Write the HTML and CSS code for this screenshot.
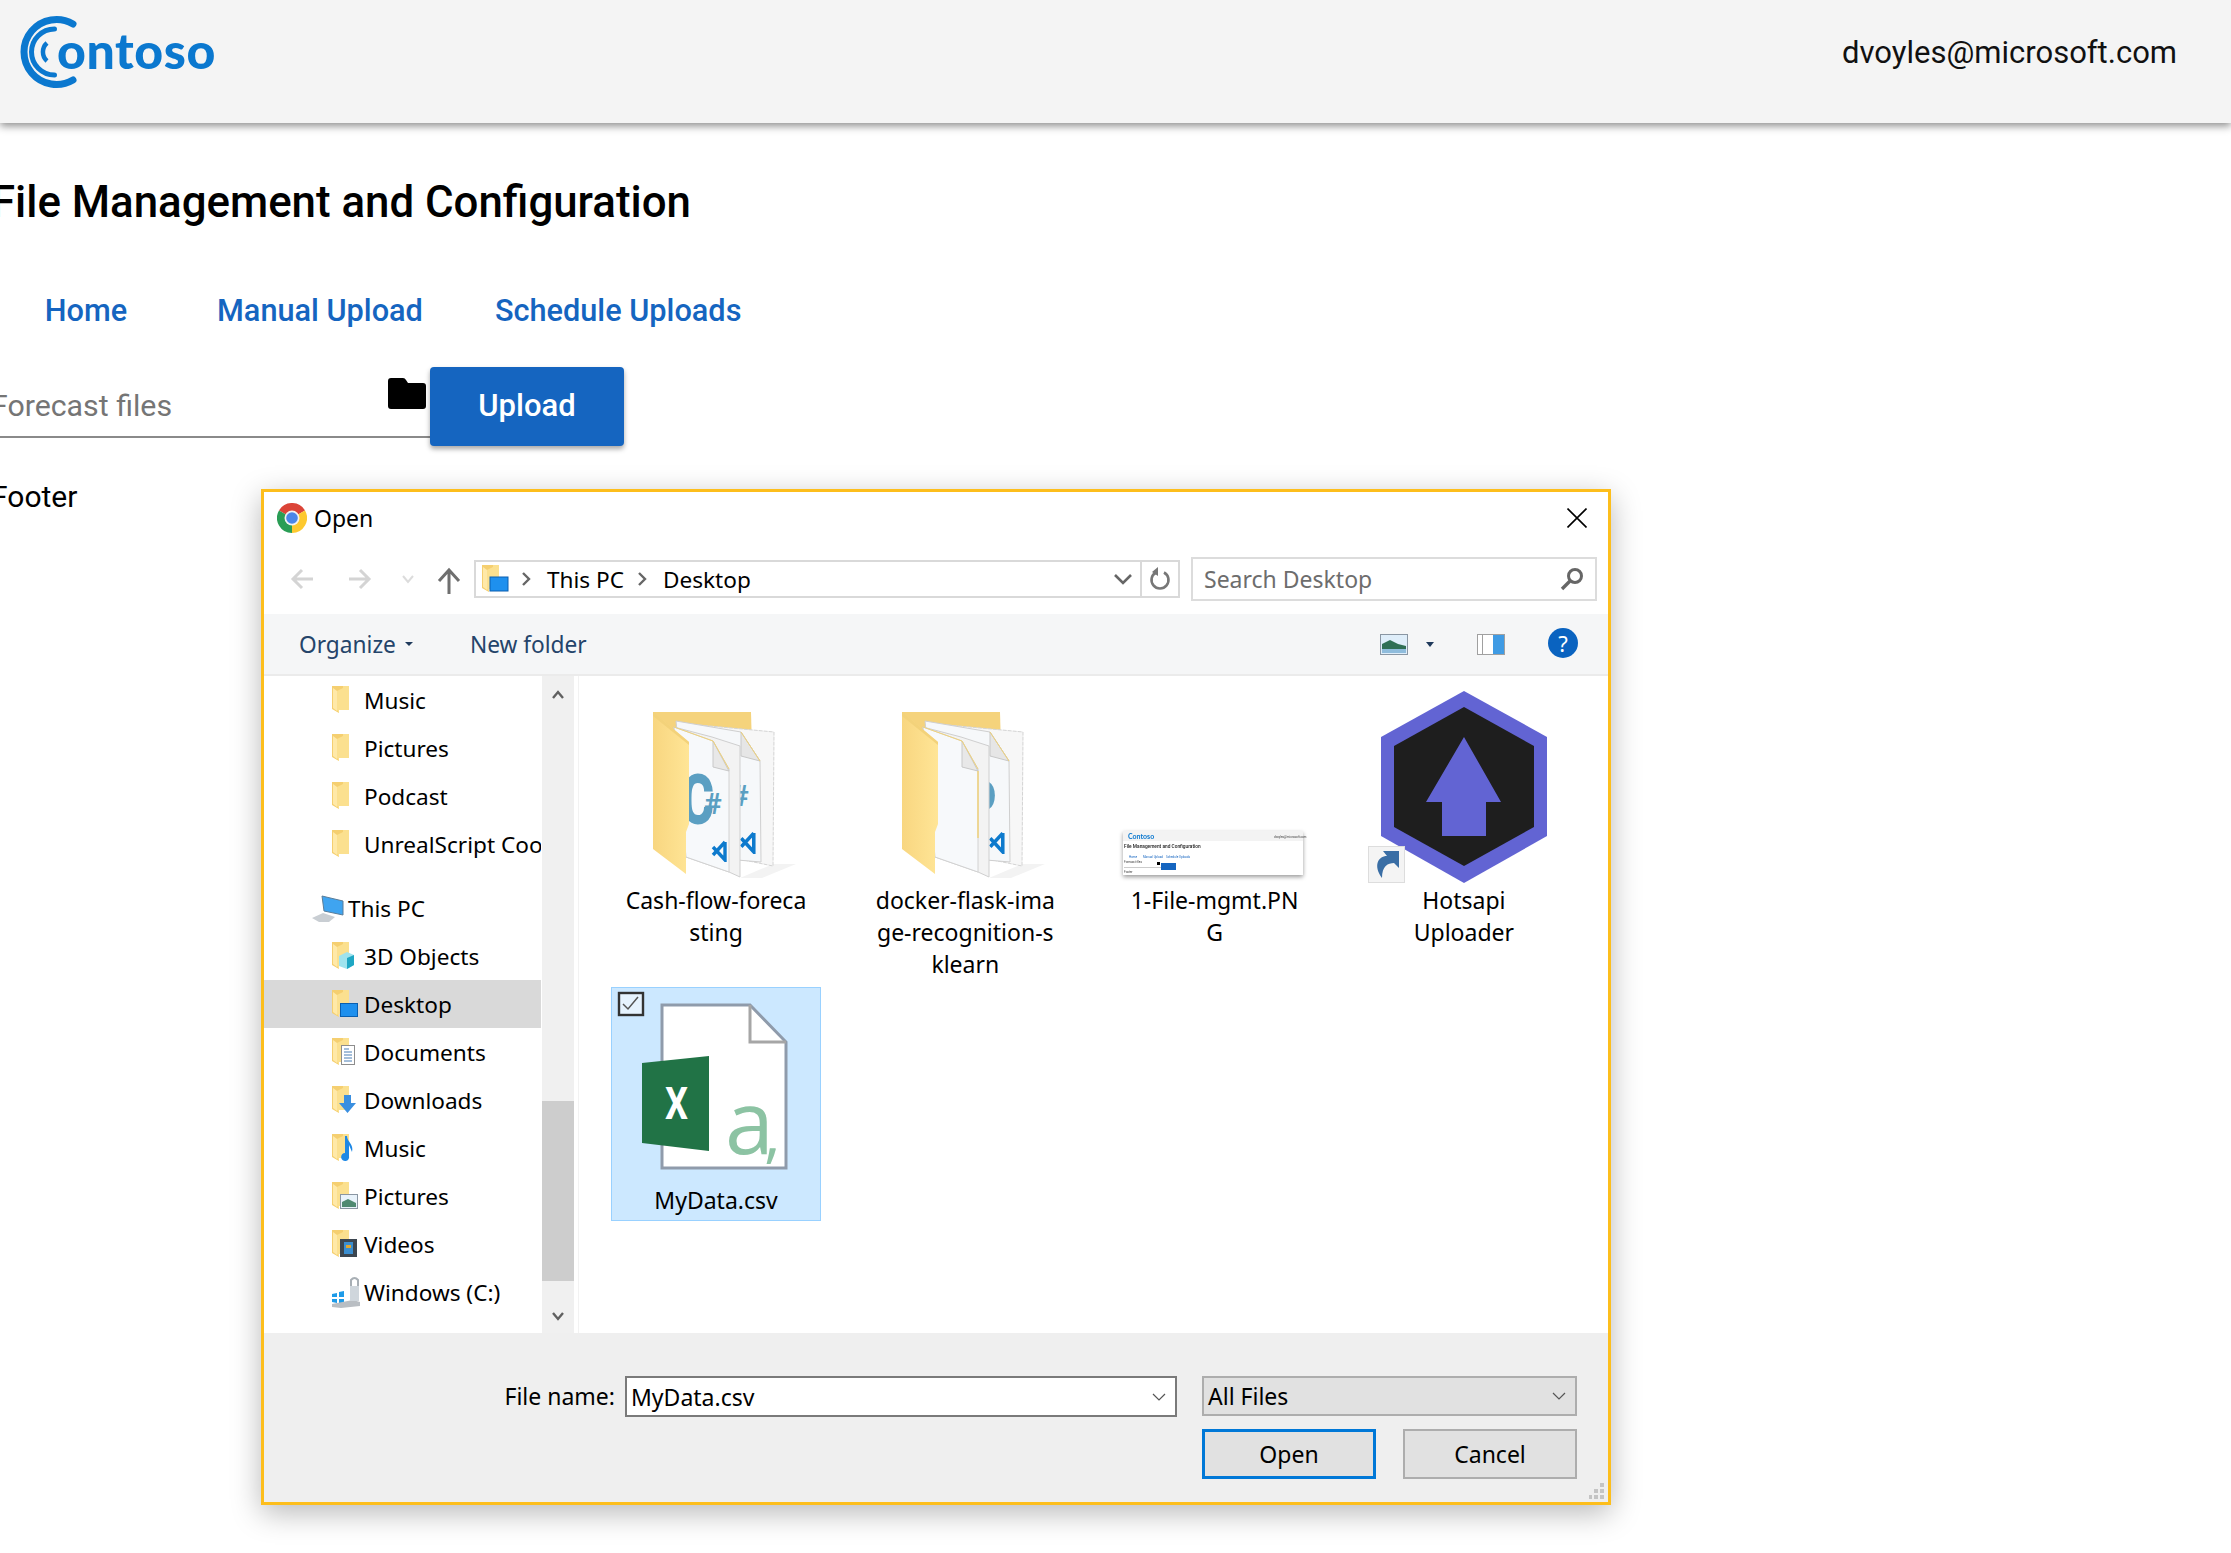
FILE: index.html
```html
<!DOCTYPE html>

<html>

<head>

<meta http-equiv="Content-Type" content="text/html; charset=utf-8" />
<title>File Management and Configuration</title>

<link rel="stylesheet" href="styles.css">

</head>

<body>

<svg class="Hidden">
    <defs>
        <linearGradient id="FlapFill" x1="0" y1="0" x2="1" y2="0">
            <stop offset="0" stop-color="#f8d680" />
            <stop offset="1" stop-color="#ffe596" />
        </linearGradient>
        <symbol id="SmallFolder" viewBox="0 0 18 28">
            <polygon points="0,0 17,0 17,24 7,24 7,27 0,22" fill="#fbe08f" />
            <polygon points="0,0 11,0 11,2 5,5 5,24 7,27 0,23" fill="#f5cf70" />
            <polygon points="1,2 5,5 5,25 1,22" fill="#ffe9a8" />
        </symbol>
        <symbol id="VsMark" viewBox="0 0 16 22">
            <path d="M14 2V20L2 7M14 2L2 15" fill="none" stroke="#0d7acd" stroke-width="3.4" />
        </symbol>
        <symbol id="FolderBack" viewBox="0 0 208 196">
            <polygon points="161,176 128,190 150,190 184,176" fill="#f3f3f3" />
            <polygon points="41,24 139,24 140,60 100,60 41,60" fill="#f5d37c" />
            <polygon points="77,36 162,44 161,178 127,171" fill="#f7f7f7" stroke="#d4d4d4" stroke-dasharray="4 1" />
            <polygon points="64,33 129,44 148,73 149,174 77,168" fill="#f6f8fa" stroke="#cfcfcf" />
            <polygon points="129,44 129,68 148,73" fill="#e6e6e6" stroke="#c8c8c8" />
            <path d="M129 44L148 73" stroke="#f0d27a" />
            <use href="#VsMark" x="127" y="143" width="17" height="23" />
        </symbol>
        <symbol id="FolderFlap" viewBox="0 0 208 196">
            <polygon points="41,24 77,54 77,136 74,144 74,186 41,161" fill="url(#FlapFill)" />
            <polygon points="41,24 77,54 77,57 41,28" fill="#f3d27a" />
        </symbol>
        <symbol id="FrontDoc" viewBox="0 0 208 196">
            <polygon points="62,39 100,49 128,58 128,189 117,184 74,169" fill="#f3f3f3" stroke="#cfcfcf" />
            <polygon points="62,39 101,53 117,81 117,184 74,169" fill="#f7f9fb" stroke="#d2d2d2" />
            <polygon points="101,53 101,79 117,83" fill="#e8e8e8" stroke="#c8c8c8" />
            <path d="M62 39L101 53L117 81" fill="none" stroke="#f0d27a" />
        </symbol>
    </defs>
</svg>

<header class="TopBar">
    <div class="Logo">
        <svg class="LogoMark" width="70" height="76" viewBox="0 0 70 76">
            <path d="M59 10A32.5 32.5 0 1 0 59 66" fill="none" stroke="#0b78cf" stroke-width="7" stroke-linecap="round" />
            <path d="M40.500 15A23 23 0 0 0 40.500 61" fill="none" stroke="#0b78cf" stroke-width="5" stroke-linecap="round" />
            <path d="M33 29A12 12 0 0 0 33 47" fill="none" stroke="#0b78cf" stroke-width="4.500" />
        </svg>
        <span class="LogoText">ontoso</span>
    </div>
    <div class="UserEmail">dvoyles@microsoft.com</div>
</header>

<main class="Page">
    <h1 class="PageTitle">File Management and Configuration</h1>
    <nav class="NavTabs">
        <a class="NavTab">Home</a>
        <a class="NavTab">Manual Upload</a>
        <a class="NavTab">Schedule Uploads</a>
    </nav>
    <div class="UploadRow">
        <div class="FileInput">
            <span class="FileHint">Forecast files</span>
            <svg class="FolderGlyph" width="38" height="31" viewBox="0 0 38 31">
                <path d="M3 0H15Q17 0 18 2L20 5H35Q38 5 38 8V28Q38 31 35 31H3Q0 31 0 28V3Q0 0 3 0Z" fill="#000" />
            </svg>
        </div>
        <button class="UploadButton">Upload</button>
    </div>
    <div class="PageFooter">Footer</div>
</main>

<div class="OpenDialog">
    <div class="TitleRow">
        <svg class="ChromeIcon" width="30" height="30" viewBox="0 0 30 30">
            <path d="M15 15L2 7.5A15 15 0 0 1 28 7.5Z" fill="#db4437" />
            <path d="M15 15L28 7.5A15 15 0 0 1 15 30Z" fill="#fdc92f" />
            <path d="M15 15L15 30A15 15 0 0 1 2 7.5Z" fill="#2a9d55" />
            <circle cx="15" cy="15" r="7.5" fill="#f2f2f2" />
            <circle cx="15" cy="15" r="5.8" fill="#4a86e8" />
        </svg>
        <span class="TitleText">Open</span>
        <svg class="CloseIcon" width="20" height="20" viewBox="0 0 20 20">
            <path d="M0.5 0.5L19.5 19.5M19.5 0.5L0.5 19.5" stroke="#000" stroke-width="1.6" />
        </svg>
    </div>

    <div class="NavRow">
        <svg class="NavArrows" width="210" height="40" viewBox="0 0 210 40">
            <path d="M49 20H29M38 11L29 20L38 29" fill="none" stroke="#d4d4d4" stroke-width="3" />
            <path d="M85 20H105M96 11L105 20L96 29" fill="none" stroke="#d4d4d4" stroke-width="3" />
            <path d="M139 17L144 23L149 17" fill="none" stroke="#dcdcdc" stroke-width="2" />
            <path d="M185 35V11M175 22L185 11L195 22" fill="none" stroke="#6f6f6f" stroke-width="3" />
        </svg>
        <div class="AddressBar">
            <svg class="AddressIcon" width="28" height="28" viewBox="0 0 28 28">
                <use href="#SmallFolder" x="0" y="0" width="18" height="28" />
                <rect x="8" y="12" width="18" height="14" fill="#1e90ee" stroke="#0a5fb0" />
            </svg>
            <svg class="Crumb" width="12" height="16" viewBox="0 0 12 16"><path d="M3 2L9 8L3 14" fill="none" stroke="#666" stroke-width="2.4" /></svg>
            <span class="CrumbText">This PC</span>
            <svg class="Crumb" width="12" height="16" viewBox="0 0 12 16"><path d="M3 2L9 8L3 14" fill="none" stroke="#666" stroke-width="2.4" /></svg>
            <span class="CrumbText">Desktop</span>
            <svg class="AddressChevron" width="18" height="12" viewBox="0 0 18 12"><path d="M1 2L9 10L17 2" fill="none" stroke="#666" stroke-width="2.6" /></svg>
            <div class="RefreshBox">
                <svg width="22" height="24" viewBox="0 0 22 24">
                    <path d="M7 5.5A8.5 8.5 0 1 0 15 5.5" fill="none" stroke="#777" stroke-width="2.6" />
                    <path d="M9 0V9L3 5Z" fill="#777" />
                </svg>
            </div>
        </div>
        <div class="SearchBox">
            <span class="SearchText">Search Desktop</span>
            <svg width="24" height="24" viewBox="0 0 24 24">
                <circle cx="15" cy="9" r="6.5" fill="none" stroke="#666" stroke-width="3" />
                <path d="M10 14L2 22" stroke="#666" stroke-width="3.4" />
            </svg>
        </div>
    </div>

    <div class="ToolBar">
        <span class="ToolText">Organize</span>
        <svg class="ToolCaret" width="8" height="4" viewBox="0 0 8 4"><path d="M0 0H8L4 4Z" fill="#1f3a5c" /></svg>
        <span class="ToolText NewFolder">New folder</span>
        <div class="ToolIcons">
            <svg width="28" height="21" viewBox="0 0 28 21">
                <rect x="0.5" y="0.5" width="27" height="20" fill="#dfeefa" stroke="#8a96a3" />
                <path d="M2 10L10 6L18 10L26 12V15H2Z" fill="#2f6f55" />
                <rect x="2" y="15" width="24" height="4" fill="#8fbcdc" />
            </svg>
            <svg class="ViewCaret" width="8" height="5" viewBox="0 0 8 5"><path d="M0 0H8L4 5Z" fill="#1f3a5c" /></svg>
            <svg class="PaneIcon" width="28" height="21" viewBox="0 0 28 21">
                <rect x="0.5" y="0.5" width="27" height="20" fill="#fff" stroke="#a0a0a0" />
                <rect x="5" y="1" width="1" height="19" fill="#a0a0a0" />
                <rect x="16" y="1" width="11" height="19" fill="#3f9be4" />
            </svg>
            <div class="HelpIcon">?</div>
        </div>
    </div>

    <div class="BrowseArea">
        <div class="SideList">
            <div class="SideRow"><svg class="SideIcon" width="32" height="28" viewBox="0 0 32 28"><use href="#SmallFolder" width="18" height="28" /></svg>Music</div>
            <div class="SideRow"><svg class="SideIcon" width="32" height="28" viewBox="0 0 32 28"><use href="#SmallFolder" width="18" height="28" /></svg>Pictures</div>
            <div class="SideRow"><svg class="SideIcon" width="32" height="28" viewBox="0 0 32 28"><use href="#SmallFolder" width="18" height="28" /></svg>Podcast</div>
            <div class="SideRow"><svg class="SideIcon" width="32" height="28" viewBox="0 0 32 28"><use href="#SmallFolder" width="18" height="28" /></svg>UnrealScript Cookbook</div>
            <div class="SideRow TopLevel">
                <svg class="SideIcon" width="37" height="30" viewBox="0 0 37 30">
                    <polygon points="11,3 32,8 32,22 13,18" fill="#3fa4f0" stroke="#5a7d99" />
                    <polygon points="1,25 12,20 24,24 18,29 8,29" fill="#c9ced3" />
                </svg>
                This PC
            </div>
            <div class="SideRow">
                <svg class="SideIcon" width="32" height="28" viewBox="0 0 32 28">
                    <use href="#SmallFolder" width="18" height="28" />
                    <polygon points="7,14 15,10 22,13 22,23 15,27 7,24" fill="#9fe3ee" />
                    <polygon points="15,16 22,13 22,23 15,27" fill="#1fa7c4" />
                </svg>
                3D Objects
            </div>
            <div class="SideRow SideSelected">
                <svg class="SideIcon" width="32" height="28" viewBox="0 0 32 28">
                    <use href="#SmallFolder" width="18" height="28" />
                    <rect x="8.5" y="13.5" width="17" height="13" fill="#1e90ee" stroke="#0a5fb0" />
                </svg>
                Desktop
            </div>
            <div class="SideRow">
                <svg class="SideIcon" width="32" height="28" viewBox="0 0 32 28">
                    <use href="#SmallFolder" width="18" height="28" />
                    <rect x="9.5" y="7.5" width="13" height="19" fill="#fff" stroke="#8d8d8d" />
                    <path d="M12 11H17M12 14H20M12 17H20M12 20H20M12 23H20" stroke="#4a7fb5" />
                </svg>
                Documents
            </div>
            <div class="SideRow">
                <svg class="SideIcon" width="32" height="28" viewBox="0 0 32 28">
                    <use href="#SmallFolder" width="18" height="28" />
                    <path d="M12 9H19V17H24L15.5 27L7 17H12Z" fill="#3a8fe0" />
                </svg>
                Downloads
            </div>
            <div class="SideRow">
                <svg class="SideIcon" width="32" height="28" viewBox="0 0 32 28">
                    <use href="#SmallFolder" width="18" height="28" />
                    <path d="M13 2L15 2C15 8 22 10 20 18L17 11V22A4 4 0 1 1 13 19Z" fill="#1e88e5" />
                </svg>
                Music
            </div>
            <div class="SideRow">
                <svg class="SideIcon" width="32" height="28" viewBox="0 0 32 28">
                    <use href="#SmallFolder" width="18" height="28" />
                    <rect x="8.5" y="12.5" width="17" height="14" fill="#e9f3fb" stroke="#8a96a3" />
                    <path d="M10 20L16 17L24 21V25H10Z" fill="#4f8a72" />
                </svg>
                Pictures
            </div>
            <div class="SideRow">
                <svg class="SideIcon" width="32" height="28" viewBox="0 0 32 28">
                    <use href="#SmallFolder" width="18" height="28" />
                    <rect x="8" y="9" width="17" height="18" fill="#3c4650" />
                    <rect x="12" y="12" width="9" height="12" fill="#3b8ed0" />
                    <path d="M14 15H19V18H14Z" fill="#e2a72e" />
                </svg>
                Videos
            </div>
            <div class="SideRow">
                <svg class="SideIcon DriveIcon" width="30" height="32" viewBox="0 0 30 32">
                    <path d="M1 18L6 17V21H1ZM8 16L13 15V21H8ZM1 23H6V27L1 26ZM8 23H13V28L8 27Z" fill="#1e9be8" />
                    <path d="M1 28L22 24L29 26V30L10 32L1 31Z" fill="#b9bec3" />
                    <rect x="19" y="10" width="9" height="15" fill="#cfd6dc" />
                    <path d="M20 10V4Q23.500 0 27 4V10" fill="none" stroke="#a8afb5" stroke-width="2" />
                </svg>
                Windows (C:)
            </div>
        </div>
        <div class="SideScroll">
            <svg class="ScrollArrow" width="14" height="10" viewBox="0 0 14 10"><path d="M2 8L7 2L12 8" fill="none" stroke="#606060" stroke-width="2.4" /></svg>
            <div class="ScrollThumb"></div>
            <svg class="ScrollArrow" width="14" height="10" viewBox="0 0 14 10"><path d="M2 2L7 8L12 2" fill="none" stroke="#606060" stroke-width="2.4" /></svg>
        </div>
        <div class="FileTiles">
            <div class="FileTile">
                <svg class="TileIcon" width="208" height="196" viewBox="0 0 208 196">
                    <use href="#FolderBack" width="208" height="196" />
                    <text class="CSharpSmall" x="119" y="118">#</text>
                    <use href="#FrontDoc" width="208" height="196" />
                    <text class="CSharpBig" x="69" y="136" textLength="33" lengthAdjust="spacingAndGlyphs">C</text>
                    <text class="CSharpHash" x="92" y="126">#</text>
                    <use href="#VsMark" x="99" y="152" width="16" height="22" />
                    <use href="#FolderFlap" width="208" height="196" />
                </svg>
                <div class="TileLabel">Cash-flow-foreca<br />sting</div>
            </div>
            <div class="FileTile">
                <svg class="TileIcon" width="208" height="196" viewBox="0 0 208 196">
                    <use href="#FolderBack" width="208" height="196" />
                    <path d="M128 94A8 14 0 0 1 128 121Z" fill="#5b9fc2" />
                    <use href="#FrontDoc" width="208" height="196" />
                    <path d="M117 83V150" stroke="#f0d27a" stroke-width="1.5" />
                    <use href="#FolderFlap" width="208" height="196" />
                </svg>
                <div class="TileLabel">docker-flask-ima<br />ge-recognition-s<br />klearn</div>
            </div>
            <div class="FileTile">
                <svg class="TileIcon" width="208" height="196" viewBox="0 0 208 196">
                    <rect class="ThumbPage" x="12" y="143" width="180" height="44" fill="#fff" />
                    <g class="ThumbContent" transform="translate(2 0)">
                        <rect x="10" y="143" width="180" height="10" fill="#f3f3f3" />
                        <text class="ThumbLogo" x="15" y="151">Contoso</text>
                        <text class="ThumbSmall" x="161" y="150">dvoyles@microsoft.com</text>
                        <text class="ThumbTitle" x="11" y="160">File Management and Configuration</text>
                        <text class="ThumbLink" x="16" y="170">Home</text>
                        <text class="ThumbLink" x="30" y="170">Manual Upload</text>
                        <text class="ThumbLink" x="53" y="170">Schedule Uploads</text>
                        <text class="ThumbSmall" x="11" y="175">Forecast files</text>
                        <rect x="11" y="179" width="37" height="1" fill="#cccccc" />
                        <rect x="44" y="174" width="3" height="3" fill="#000" />
                        <rect x="48" y="175" width="15" height="7" fill="#1565c0" />
                        <text class="ThumbSmall" x="11" y="185">Footer</text>
                    </g>
                </svg>
                <div class="TileLabel">1-File-mgmt.PN<br />G</div>
            </div>
            <div class="FileTile">
                <svg class="TileIcon" width="208" height="196" viewBox="0 0 208 196">
                    <polygon points="104,3 187,49 187,148 104,195 21,148 21,49" fill="#6264d3" />
                    <polygon points="104,19 174,58 174,139 104,178 34,139 34,58" fill="#1e1e1e" />
                    <polygon points="104,49 141,114 126,114 126,148 82,148 82,114 66,114" fill="#6264d3" />
                    <rect x="8.500" y="158.500" width="36" height="36" fill="#f4f4f4" stroke="#dddddd" />
                    <path d="M22 190C13 178 18 168 27 168L23 163H39V180L34 175C28 175 22 178 22 190Z" fill="#3a6ea5" />
                </svg>
                <div class="TileLabel">Hotsapi<br />Uploader</div>
            </div>
            <div class="FileTile TileSelected">
                <svg class="TileIcon" width="208" height="196" viewBox="0 0 208 196">
                    <polygon points="50,17 138,17 174,54 174,180 50,180" fill="#fff" stroke="#8f9bab" stroke-width="3" />
                    <path d="M138 17V54H174" fill="none" stroke="#a6a6a6" stroke-width="3" />
                    <text class="CsvLetter" x="113" y="166">a</text>
                    <text class="CsvComma" x="152" y="168">,</text>
                    <polygon points="30,75 97,68 97,163 30,155" fill="#217346" />
                    <text class="ExcelLetter" x="53" y="131" textLength="23" lengthAdjust="spacingAndGlyphs">X</text>
                    <rect x="7" y="5" width="24" height="22" fill="#e6f3fe" stroke="#333" stroke-width="2.400" />
                    <path d="M11 16L16 21L26 9" fill="none" stroke="#555" stroke-width="1.500" />
                </svg>
                <div class="TileLabel">MyData.csv</div>
            </div>
        </div>
    </div>

    <div class="DialogFooter">
        <div class="NameRow">
            <span class="NameLabel">File name:</span>
            <div class="NameInput">
                <span>MyData.csv</span>
                <svg width="14" height="8" viewBox="0 0 14 8"><path d="M1 1L7 7L13 1" fill="none" stroke="#555" stroke-width="1.200" /></svg>
            </div>
            <div class="TypeSelect">
                <span>All Files</span>
                <svg width="14" height="8" viewBox="0 0 14 8"><path d="M1 1L7 7L13 1" fill="none" stroke="#555" stroke-width="1.200" /></svg>
            </div>
        </div>
        <div class="ButtonRow">
            <div class="DialogButton DefaultButton">Open</div>
            <div class="DialogButton">Cancel</div>
        </div>
    </div>

    <svg class="ResizeGrip" width="16" height="16" viewBox="0 0 16 16">
        <path d="M11 0H15V4H11ZM11 6H15V10H11ZM5 6H9V10H5ZM11 12H15V16H11ZM5 12H9V16H5ZM0 12H3V16H0Z" fill="#c4c4c4" />
    </svg>
</div>

</body>
</html>
```

FILE: styles.css
```css
html, body {
    height: 100%;
    margin: 0;
    background: #fff;
    overflow: hidden;
    font-family: Roboto, sans-serif;
}
.Hidden {
    position: absolute;
    width: 0;
    height: 0;
}

/* page behind the dialog */
.TopBar {
    display: flex;
    justify-content: space-between;
    align-items: flex-start;
    height: 123px;
    background: #f4f4f4;
    box-shadow: 0 3px 8px rgba(0, 0, 0, 0.45);
}
.Logo {
    display: flex;
    align-items: center;
    margin: 14px 0 0 14px;
}
.LogoText {
    margin: -5px 0 0 -27px;
    color: #0b78cf;
    font-family: Lato, sans-serif;
    font-weight: 900;
    font-size: 50px;
    letter-spacing: 0.6px;
}
.UserEmail {
    margin: 33px 54px 0 0;
    font-size: 31px;
    line-height: 40px;
    color: #111;
}
.Page {
    margin-left: -9px;
}
.PageTitle {
    margin: 54px 0 0;
    font-size: 43.800px;
    line-height: 50px;
    font-weight: 500;
    color: #000;
}
.NavTabs {
    display: flex;
    margin-top: 64px;
}
.NavTab {
    box-sizing: border-box;
    min-width: 190px;
    padding: 0 36px;
    text-align: center;
    font-size: 30.700px;
    line-height: 40px;
    font-weight: 500;
    color: #1565c0;
}
.UploadRow {
    display: flex;
    margin-top: 36px;
}
.FileInput {
    box-sizing: border-box;
    display: flex;
    justify-content: space-between;
    width: 439px;
    height: 71px;
    border-bottom: 2px solid #8a8a8a;
}
.FileHint {
    align-self: flex-end;
    margin-bottom: 12px;
    font-size: 30.300px;
    line-height: 36px;
    color: #757575;
}
.FolderGlyph {
    margin: 11px 4px 0 0;
}
.UploadButton {
    width: 194px;
    height: 79px;
    border: none;
    border-radius: 4px;
    padding-bottom: 3px;
    background: #1565c0;
    color: #fff;
    font-family: Roboto, sans-serif;
    font-size: 31px;
    font-weight: 500;
    box-shadow: 0 3px 5px rgba(0, 0, 0, 0.35);
}
.PageFooter {
    margin-top: 33px;
    font-size: 30px;
    line-height: 36px;
    color: #000;
}

/* file dialog */
.OpenDialog {
    position: absolute;
    left: 261px;
    top: 489px;
    box-sizing: border-box;
    width: 1350px;
    height: 1016px;
    border: 3px solid #fdbe1c;
    background: #fff;
    box-shadow: 0 8px 28px rgba(0, 0, 0, 0.28);
    font-family: "Noto Sans", sans-serif;
    font-size: 23px;
    color: #000;
}
.TitleRow {
    display: flex;
    align-items: center;
    height: 52px;
    padding: 0 21px 0 13px;
}
.ChromeIcon {
    margin-right: 7px;
}
.TitleText {
    flex: 1;
}
.NavRow {
    display: flex;
    align-items: center;
    height: 70px;
}
.AddressBar {
    box-sizing: border-box;
    display: flex;
    align-items: center;
    width: 706px;
    height: 38px;
    padding-left: 6px;
    border: 2px solid #d9d9d9;
    font-size: 22.600px;
}
.AddressIcon {
    margin-right: 10px;
}
.Crumb {
    margin-right: 15px;
}
.CrumbText {
    margin-right: 12px;
}
.AddressChevron {
    margin-left: auto;
    margin-right: 8px;
}
.RefreshBox {
    display: flex;
    align-items: center;
    justify-content: center;
    width: 36px;
    height: 100%;
    border-left: 2px solid #d9d9d9;
}
.SearchBox {
    box-sizing: border-box;
    display: flex;
    justify-content: space-between;
    align-items: center;
    width: 406px;
    height: 44px;
    margin-left: 11px;
    padding: 0 11px;
    border: 2px solid #dcdcdc;
}
.SearchText {
    color: #6d6d6d;
}
.ToolBar {
    box-sizing: border-box;
    display: flex;
    align-items: center;
    height: 62px;
    padding: 0 30px 0 35px;
    background: #f5f6f7;
    border-bottom: 2px solid #ebebeb;
    font-size: 22.700px;
}
.ToolText {
    color: #24446a;
}
.ToolCaret {
    margin-left: 9px;
}
.NewFolder {
    margin-left: 57px;
}
.ToolIcons {
    display: flex;
    align-items: center;
    margin-left: auto;
}
.ViewCaret {
    margin-left: 18px;
}
.PaneIcon {
    margin-left: 43px;
}
.HelpIcon {
    width: 30px;
    height: 30px;
    margin: -2px 0 0 43px;
    border-radius: 50%;
    background: #0a63c0;
    color: #fff;
    text-align: center;
    font-size: 22px;
    line-height: 30px;
}
.BrowseArea {
    display: flex;
    height: 657px;
}
.SideList {
    flex: none;
    width: 277px;
    margin-right: 1px;
    overflow: hidden;
}
.SideRow {
    box-sizing: border-box;
    display: flex;
    align-items: center;
    height: 48px;
    padding-left: 68px;
    white-space: nowrap;
    font-size: 22.600px;
}
.SideIcon {
    flex: none;
    width: 32px;
}
.DriveIcon {
    margin-left: -4px;
    width: 36px;
}
.TopLevel {
    margin-top: 16px;
    padding-left: 47px;
}
.TopLevel .SideIcon {
    width: 37px;
}
.SideSelected {
    background: #d9d9d9;
}
.SideScroll {
    flex: none;
    display: flex;
    flex-direction: column;
    align-items: center;
    justify-content: space-between;
    width: 32px;
    background: #f0f0f0;
}
.ScrollArrow {
    margin: 14px 0 12px;
}
.ScrollThumb {
    width: 100%;
    height: 180px;
    margin-top: auto;
    margin-bottom: 16px;
    background: #cdcdcd;
}
.FileTiles {
    flex: 1;
    display: grid;
    grid-template-columns: repeat(4, 210px);
    grid-auto-rows: min-content;
    column-gap: 39.300px;
    row-gap: 2px;
    margin-left: 4px;
    padding: 11px 0 0 32px;
    border-left: 1px solid #f2f2f2;
}
.FileTile {
    box-sizing: border-box;
    padding-bottom: 4px;
    border: 1px solid transparent;
}
.TileIcon {
    display: block;
}
.TileLabel {
    text-align: center;
    line-height: 32px;
}
.TileSelected {
    background: #cce8ff;
    border-color: #99d1ff;
}
.CSharpBig {
    font-family: Roboto, sans-serif;
    font-weight: 900;
    font-size: 70px;
    fill: #5b9fc2;
}
.CSharpHash {
    font-family: Roboto, sans-serif;
    font-weight: 700;
    font-size: 30px;
    fill: #5b9fc2;
}
.CSharpSmall {
    font-family: Roboto, sans-serif;
    font-weight: 700;
    font-size: 30px;
    fill: #5b9fc2;
}
.ThumbPage {
    filter: drop-shadow(0 2px 2px rgba(0, 0, 0, 0.4));
}
.ThumbContent {
    filter: blur(0.4px);
}
.ThumbLogo {
    font-family: Lato, sans-serif;
    font-weight: 700;
    font-size: 7px;
    fill: #0b78cf;
}
.ThumbSmall {
    font-family: Roboto, sans-serif;
    font-size: 3px;
    fill: #444;
}
.ThumbTitle {
    font-family: Roboto, sans-serif;
    font-weight: 500;
    font-size: 4.800px;
    fill: #222;
}
.ThumbLink {
    font-family: Roboto, sans-serif;
    font-size: 3px;
    fill: #1565c0;
}
.ExcelLetter {
    font-family: Roboto, sans-serif;
    font-weight: 700;
    font-size: 44px;
    fill: #fff;
}
.CsvLetter {
    font-family: "Open Sans", sans-serif;
    font-size: 88px;
    fill: #8cc3a3;
}
.CsvComma {
    font-family: "Open Sans", sans-serif;
    font-size: 64px;
    fill: #8cc3a3;
}
.DialogFooter {
    box-sizing: border-box;
    height: 169px;
    padding: 43px 31px 0 0;
    background: #efefef;
}
.NameRow {
    display: flex;
    justify-content: flex-end;
    align-items: flex-start;
}
.NameLabel {
    margin-right: 10px;
    line-height: 41px;
}
.NameInput, .TypeSelect {
    box-sizing: border-box;
    display: flex;
    justify-content: space-between;
    align-items: center;
    height: 41px;
    padding: 0 9px 0 4px;
}
.NameInput {
    width: 552px;
    border: 2px solid #7a7a7a;
    background: #fff;
}
.TypeSelect {
    width: 375px;
    height: 40px;
    margin-left: 25px;
    border: 2px solid #adadad;
    background: #e1e1e1;
}
.ButtonRow {
    display: flex;
    justify-content: flex-end;
    gap: 27px;
    margin-top: 12px;
}
.DialogButton {
    box-sizing: border-box;
    width: 174px;
    height: 50px;
    border: 2px solid #adadad;
    background: #e1e1e1;
    text-align: center;
    line-height: 46px;
}
.DefaultButton {
    border: 3px solid #0078d7;
    line-height: 44px;
}
.ResizeGrip {
    position: absolute;
    right: 3px;
    bottom: 3px;
}
```
